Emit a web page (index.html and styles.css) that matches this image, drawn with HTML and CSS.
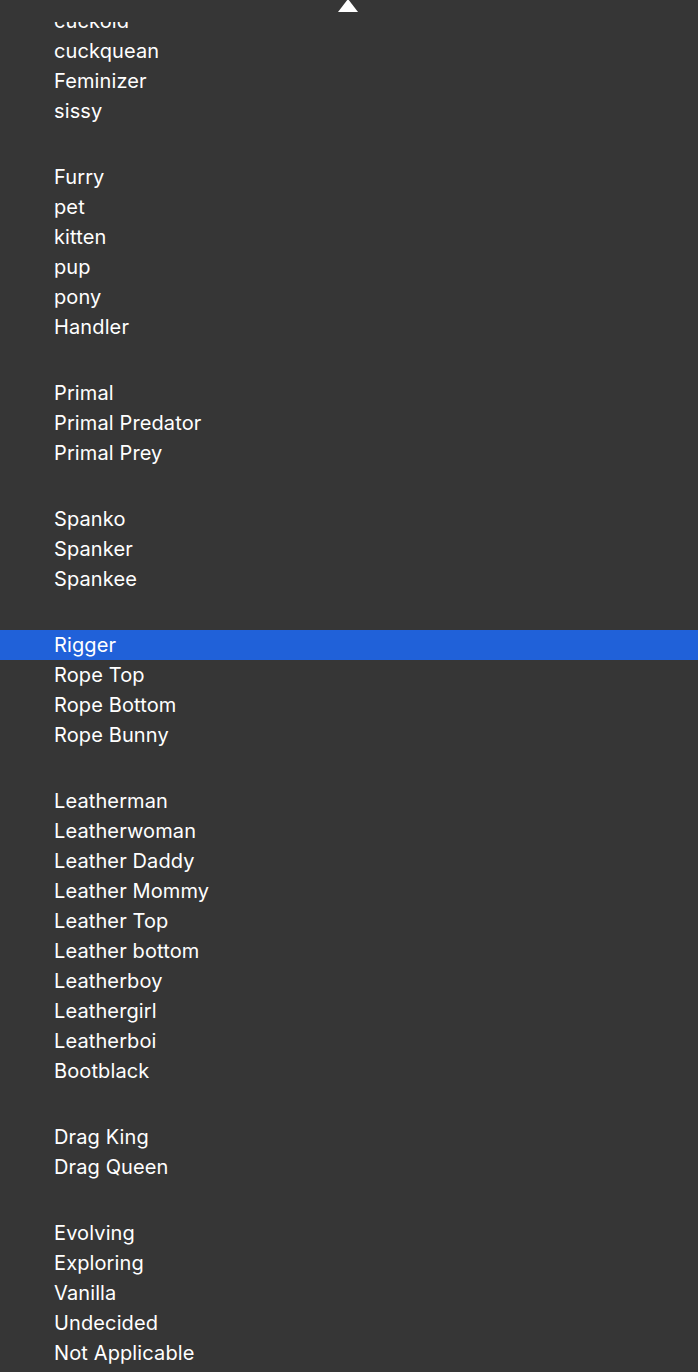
FILE: index.html
```html
<!DOCTYPE html>
<html>
<head>
<meta charset="utf-8">
<link rel="stylesheet" href="styles.css">
</head>
<body>
<div class="menu">
  <div class="scroll-up"><svg class="arrow" width="20" height="12" viewBox="0 0 20 12"><polygon points="10,-1 20,12 0,12" fill="#ffffff"/></svg></div>
  <div class="list">
    <div class="group">
      <div class="item">cuckold</div>
      <div class="item">cuckquean</div>
      <div class="item">Feminizer</div>
      <div class="item">sissy</div>
    </div>
    <div class="group">
      <div class="item">Furry</div>
      <div class="item">pet</div>
      <div class="item">kitten</div>
      <div class="item">pup</div>
      <div class="item">pony</div>
      <div class="item">Handler</div>
    </div>
    <div class="group">
      <div class="item">Primal</div>
      <div class="item">Primal Predator</div>
      <div class="item">Primal Prey</div>
    </div>
    <div class="group">
      <div class="item">Spanko</div>
      <div class="item">Spanker</div>
      <div class="item">Spankee</div>
    </div>
    <div class="group">
      <div class="item selected">Rigger</div>
      <div class="item">Rope Top</div>
      <div class="item">Rope Bottom</div>
      <div class="item">Rope Bunny</div>
    </div>
    <div class="group">
      <div class="item">Leatherman</div>
      <div class="item">Leatherwoman</div>
      <div class="item">Leather Daddy</div>
      <div class="item">Leather Mommy</div>
      <div class="item">Leather Top</div>
      <div class="item">Leather bottom</div>
      <div class="item">Leatherboy</div>
      <div class="item">Leathergirl</div>
      <div class="item">Leatherboi</div>
      <div class="item">Bootblack</div>
    </div>
    <div class="group">
      <div class="item">Drag King</div>
      <div class="item">Drag Queen</div>
    </div>
    <div class="group">
      <div class="item">Evolving</div>
      <div class="item">Exploring</div>
      <div class="item">Vanilla</div>
      <div class="item">Undecided</div>
      <div class="item">Not Applicable</div>
    </div>
  </div>
</div>
</body>
</html>
```
FILE: styles.css
```css
html, body {
  margin: 0;
  padding: 0;
  background: #363636;
}
.menu {
  position: relative;
  width: 698px;
  height: 1372px;
  overflow: hidden;
  background: #363636;
  font-family: Inter, "Liberation Sans", sans-serif;
  font-size: 20px;
  letter-spacing: 0.12px;
  color: #ffffff;
}
.scroll-up {
  position: absolute;
  top: 0;
  left: 0;
  right: 0;
  height: 22px;
  background: #363636;
  z-index: 2;
}
.arrow {
  position: absolute;
  left: 338px;
  top: 0;
}
.list {
  display: flex;
  flex-direction: column;
  gap: 36px;
  padding-top: 6px;
}
.group {
  display: flex;
  flex-direction: column;
}
.item {
  height: 30px;
  line-height: 30px;
  padding-left: 54px;
  white-space: nowrap;
}
.item.selected {
  background: #2061d9;
}
```
